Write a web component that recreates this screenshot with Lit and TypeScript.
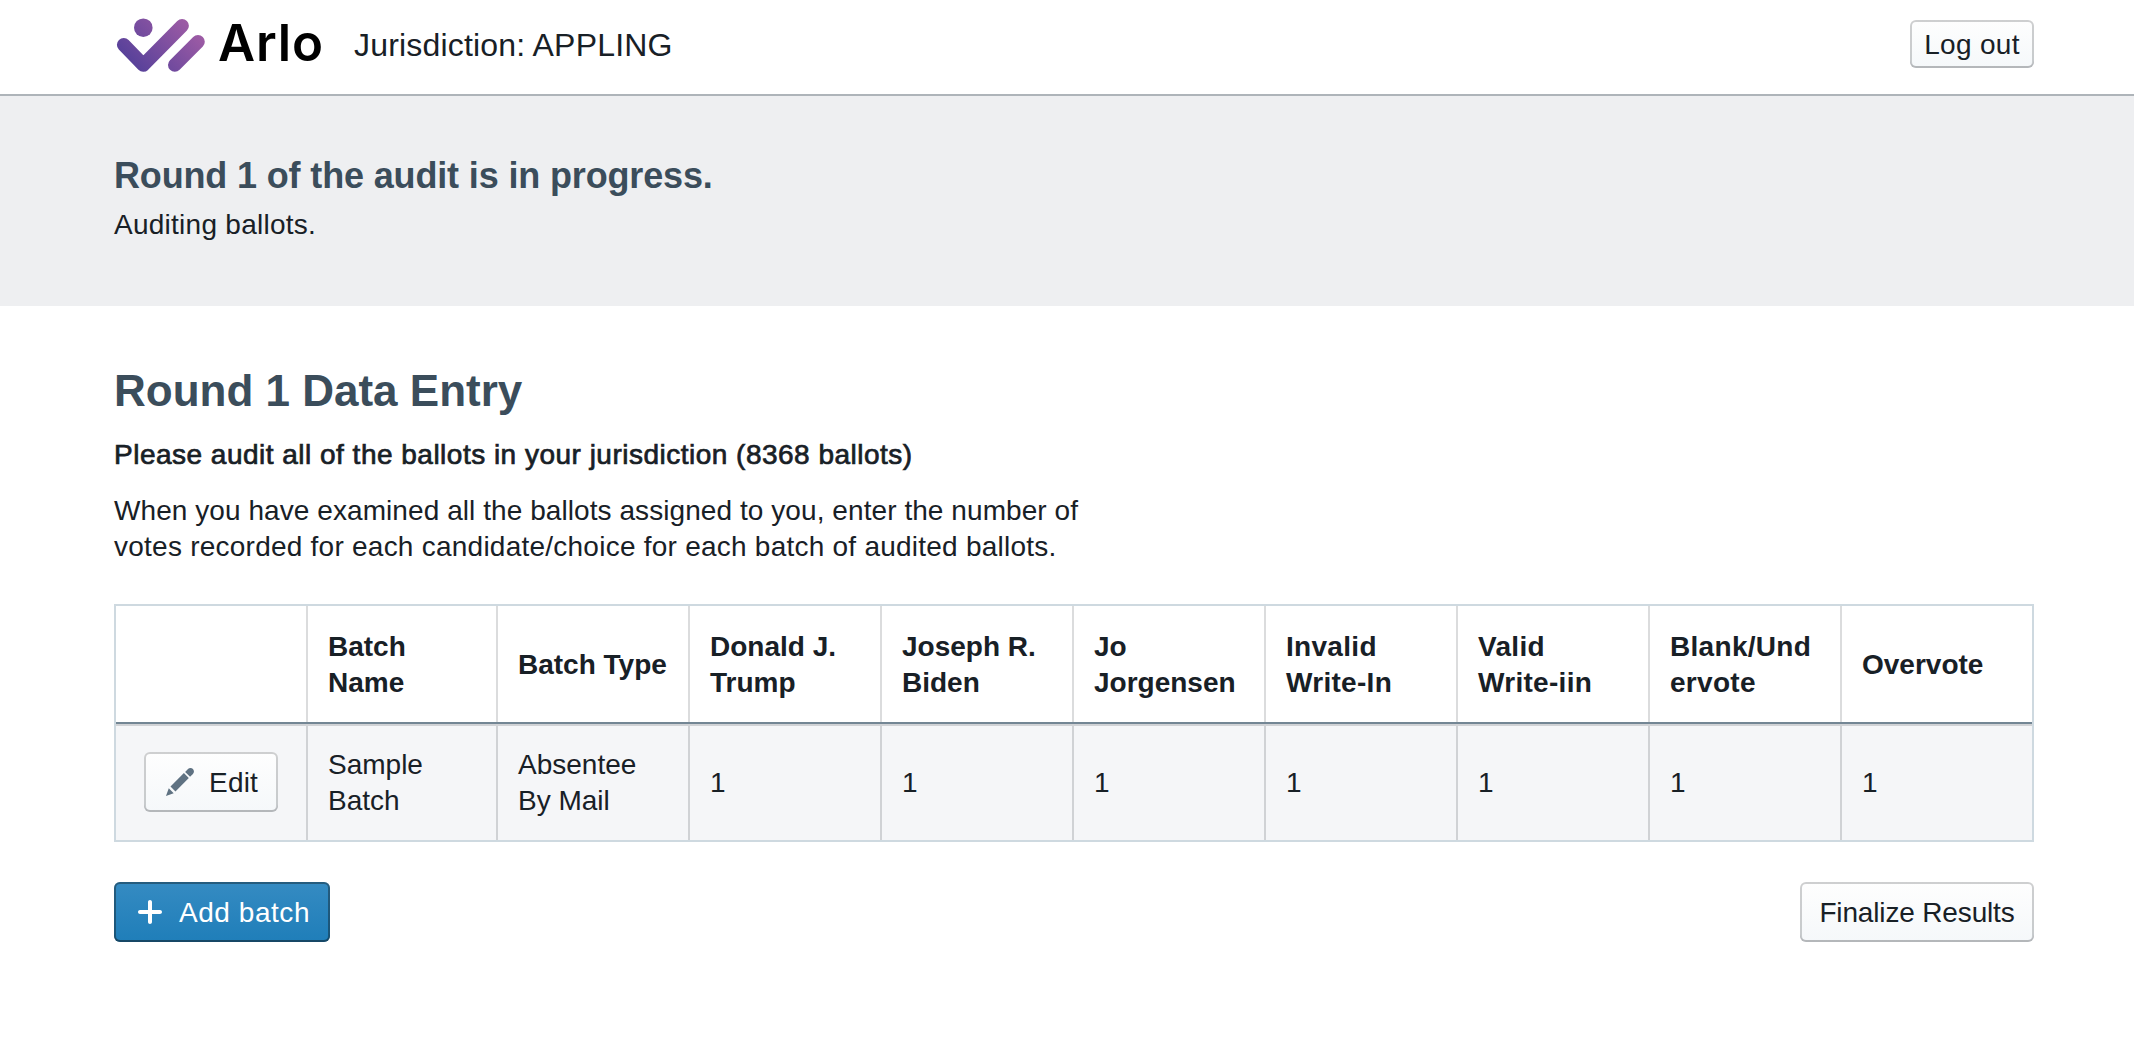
import { LitElement, html, css, svg } from "lit";
import { customElement, property } from "lit/decorators.js";

const pencil = svg`<path d="M3.25 10.26l2.47 2.47 6.69-6.69-2.46-2.48-6.7 6.7zM.99 14.99l3.86-1.39-2.46-2.44L.99 15zm12.25-14c-.48 0-.92.2-1.24.51l-1.44 1.44 2.47 2.47 1.44-1.44c.32-.32.51-.75.51-1.24.01-.95-.77-1.74-1.74-1.74z"/>`;
const plus = svg`<path d="M13 7H9V3c0-.55-.45-1-1-1s-1 .45-1 1v4H3c-.55 0-1 .45-1 1s.45 1 1 1h4v4c0 .55.45 1 1 1s1-.45 1-1V9h4c.55 0 1-.45 1-1s-.45-1-1-1z"/>`;

@customElement("arlo-logo")
class ArloLogo extends LitElement {
  static styles = css`
    :host {
      display: flex;
      align-items: center;
    }
    .mark {
      display: block;
      width: 92px;
      height: 60px;
    }
    .name {
      width: 106px;
      font: 600 51px/60px Inter, "Liberation Sans", sans-serif;
      letter-spacing: 0.8px;
      color: #000;
      margin-left: 12px;
      padding-bottom: 2px;
    }
  `;
  render() {
    return html`
      <svg class="mark" viewBox="0 0 92 60">
        <defs>
          <linearGradient id="g" gradientUnits="userSpaceOnUse" x1="22" y1="54" x2="72" y2="4">
            <stop offset="0" stop-color="#58419a" />
            <stop offset="1" stop-color="#9f5ca5" />
          </linearGradient>
        </defs>
        <circle cx="29.3" cy="13.7" r="9.3" fill="url(#g)" />
        <g fill="none" stroke="url(#g)" stroke-width="13.6" stroke-linecap="round" stroke-linejoin="round">
          <path d="M9.7 30.8L29.3 51L68.1 11.8" />
          <path d="M60.8 51L84 27.7" />
        </g>
      </svg>
      <span class="name">Arlo</span>
    `;
  }
}

@customElement("arlo-button")
class ArloButton extends LitElement {
  @property({ reflect: true }) kind = "default";
  @property({ reflect: true }) icon = "";
  static styles = css`
    :host {
      display: inline-block;
    }
    .btn {
      display: flex;
      align-items: center;
      justify-content: center;
      box-sizing: border-box;
      width: 100%;
      height: 60px;
      border: 0;
      border-radius: 6px;
      margin: 0;
      padding: 0 18px;
      gap: 13px;
      font: inherit;
      letter-spacing: inherit;
      line-height: 36px;
      white-space: nowrap;
      color: #182026;
      background: linear-gradient(to bottom, #fefefe, #f5f8fa);
      box-shadow: inset 0 0 0 2px rgba(16, 22, 26, 0.2), inset 0 -2px 0 rgba(16, 22, 26, 0.1);
    }
    .with-icon {
      justify-content: flex-start;
      padding: 0 0 0 20px;
    }
    :host([kind="small"]) .btn {
      height: 48px;
      padding: 0 14px;
    }
    :host([kind="primary"]) .btn {
      color: #fff;
      background: linear-gradient(to bottom, #358bc2, #1f7eb9);
      box-shadow: inset 0 0 0 2px rgba(16, 22, 26, 0.4), inset 0 -2px 0 rgba(16, 22, 26, 0.2);
    }
    .label {
      padding-top: 2px;
    }
    .icon {
      display: block;
      flex: none;
      width: 32px;
      height: 32px;
      fill: #5f7282;
    }
    :host([kind="primary"]) .icon {
      fill: #fff;
    }
  `;
  render() {
    const glyph = this.icon === "edit" ? pencil : plus;
    return html`<button class="btn ${this.icon ? "with-icon" : ""}">
      ${this.icon ? html`<svg class="icon" viewBox="0 0 16 16">${glyph}</svg>` : ""}<span class="label"><slot></slot></span>
    </button>`;
  }
}

@customElement("app-root")
class AppRoot extends LitElement {
  static styles = css`
    :host {
      display: block;
      min-height: 1050px;
      background: #fff;
      color: #182026;
      font: 28px/36px "Liberation Sans", Arial, sans-serif;
    }
    .header {
      display: flex;
      align-items: center;
      box-sizing: border-box;
      height: 96px;
      padding: 0 100px 6px 114px;
      border-bottom: 2px solid #aeb4b9;
    }
    .jurisdiction {
      flex: 1;
      margin-left: 30px;
      padding-top: 2px;
      font-size: 32px;
      line-height: 40px;
      letter-spacing: 0.18px;
    }
    .logout {
      width: 124px;
      letter-spacing: 0.3px;
    }
    .status {
      box-sizing: border-box;
      height: 210px;
      padding: 59px 100px 0 114px;
      background: #eeeff1;
    }
    .status-title {
      margin: 0 0 10px;
      font-size: 36px;
      line-height: 42px;
      letter-spacing: -0.15px;
      color: #3b4d5b;
    }
    .status-text {
      margin: 0;
      letter-spacing: 0.26px;
    }
    .main {
      padding: 60px 100px 0 114px;
    }
    .title {
      margin: 0 0 21px;
      font-size: 44px;
      line-height: 50px;
      letter-spacing: 0;
      color: #3b4d5b;
    }
    .lead {
      margin: 0 0 20px;
      letter-spacing: 0.49px;
      -webkit-text-stroke: 0.7px #182026;
    }
    .help {
      margin: 0 0 39px;
      letter-spacing: 0.07px;
    }
    .help-end {
      letter-spacing: 0.24px;
    }
    .table {
      width: 1920px;
      table-layout: fixed;
      border: 2px solid #ced9e0;
      border-collapse: separate;
      border-spacing: 0;
    }
    .narrow {
      width: 190px;
    }
    .wide {
      width: 192px;
    }
    .th,
    .td {
      box-sizing: border-box;
      padding: 2px 0 0 22px;
      text-align: left;
      vertical-align: middle;
      white-space: pre-line;
    }
    .th {
      height: 118px;
      padding-top: 0;
      box-shadow: inset 0 -2px 0 #738694, inset 2px 0 0 #dbdcdd;
    }
    .spread {
      letter-spacing: 0.3px;
    }
    .td {
      height: 116px;
      background: #f5f6f8;
      box-shadow: inset 0 2px 0 #d0d2d5, inset 2px 0 0 #d0d2d5;
    }
    .th:first-child {
      box-shadow: inset 0 -2px 0 #738694;
    }
    .td:first-child {
      padding: 0;
      text-align: center;
      box-shadow: inset 0 2px 0 #d0d2d5;
    }
    .edit {
      width: 134px;
      vertical-align: middle;
      letter-spacing: 0.2px;
    }
    .actions {
      display: flex;
      justify-content: space-between;
      margin-top: 40px;
    }
    .add {
      width: 216px;
      letter-spacing: 0.55px;
    }
    .finalize {
      width: 234px;
      letter-spacing: -0.15px;
    }
  `;

  private columns = [
    "Batch\nName",
    "Batch Type",
    "Donald J.\nTrump",
    "Joseph R.\nBiden",
    "Jo\nJorgensen",
    "Invalid\nWrite-In",
    "Valid\nWrite-iin",
    "Blank/Und\nervote",
    "Overvote",
  ];
  private rows = [["Sample\nBatch", "Absentee\nBy Mail", "1", "1", "1", "1", "1", "1", "1"]];

  render() {
    return html`
      <header class="header">
        <arlo-logo></arlo-logo>
        <span class="jurisdiction">Jurisdiction: APPLING</span>
        <arlo-button class="logout" kind="small">Log out</arlo-button>
      </header>
      <section class="status">
        <h4 class="status-title">Round 1 of the audit is in progress.</h4>
        <p class="status-text">Auditing ballots.</p>
      </section>
      <main class="main">
        <h3 class="title">Round 1 Data Entry</h3>
        <p class="lead">Please audit all of the ballots in your jurisdiction (8368 ballots)</p>
        <p class="help">
          When you have examined all the ballots assigned to you, enter the number of<br />
          <span class="help-end">votes recorded for each candidate/choice for each batch of audited ballots.</span>
        </p>
        <table class="table">
          <colgroup>
            <col class="narrow" />
            <col class="narrow" />
            ${this.columns.slice(1).map(() => html`<col class="wide" />`)}
          </colgroup>
          <thead>
            <tr>
              <th class="th"></th>
              ${this.columns.map((c) => html`<th class="th ${/Write|Blank/.test(c) ? "spread" : ""}">${c}</th>`)}
            </tr>
          </thead>
          <tbody>
            ${this.rows.map(
              (row) => html`<tr>
                <td class="td"><arlo-button class="edit" icon="edit">Edit</arlo-button></td>
                ${row.map((v) => html`<td class="td">${v}</td>`)}
              </tr>`
            )}
          </tbody>
        </table>
        <div class="actions">
          <arlo-button class="add" kind="primary" icon="add">Add batch</arlo-button>
          <arlo-button class="finalize">Finalize Results</arlo-button>
        </div>
      </main>
    `;
  }
}
